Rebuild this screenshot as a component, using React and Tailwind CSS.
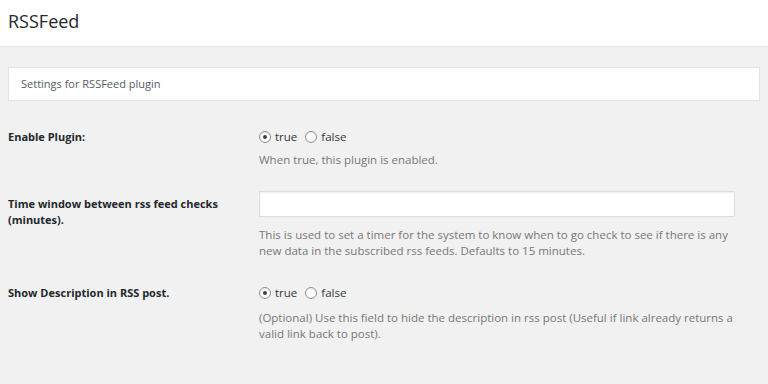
import React, { useState } from 'react';

const Radio = ({ checked, label, onClick }) => (
    <label className="flex items-center gap-[4px] cursor-pointer" onClick={onClick}>
        <span className="w-[12px] h-[12px] rounded-full border border-[#8c8f94] bg-white flex items-center justify-center shadow-[inset_0_1px_2px_rgba(0,0,0,0.1)]">
            {checked && <span className="w-[4px] h-[4px] rounded-full bg-[#3c434a]" />}
        </span>
        <span>{label}</span>
    </label>
);

const BoolField = ({ value, onChange }) => (
    <div className="flex items-center gap-[8px] h-[16px] text-[11.5px] text-[#32373c]">
        <Radio checked={value} label="true" onClick={() => onChange(true)} />
        <Radio checked={!value} label="false" onClick={() => onChange(false)} />
    </div>
);

const App = () => {
    const [enabled, setEnabled] = useState(true);
    const [interval, setInterval] = useState('');
    const [showDesc, setShowDesc] = useState(true);

    return (
        <div className="min-h-screen bg-[#f1f1f1] text-[11px] leading-[16px] text-[#444] font-['Open_Sans',sans-serif]">
            {/* Header */}
            <div className="bg-white h-[47px] border-b border-[#e5e5e5] px-[8px] pt-[8px]">
                <h1 className="text-[18px] leading-[26px] text-[#23282d]">RSSFeed</h1>
            </div>

            <div className="px-[8px] pt-[20px]">
                <div className="bg-white border border-[#e2e2e2] h-[34px] px-[12px] flex items-center text-[#555d66]">
                    Settings for RSSFeed plugin
                </div>

                {/* Enable Plugin */}
                <div className="flex mt-[28px]">
                    <div className="w-[251px] shrink-0 font-bold text-[#23282d]">Enable Plugin:</div>
                    <div className="flex-1">
                        <BoolField value={enabled} onChange={setEnabled} />
                        <p className="mt-[7px] text-[11.5px] text-[#777]">When true, this plugin is enabled.</p>
                    </div>
                </div>

                {/* Time window */}
                <div className="flex mt-[23px]">
                    <div className="w-[251px] shrink-0 pr-[20px] pt-[5px] font-bold text-[#23282d]">
                        Time window between rss feed checks (minutes).
                    </div>
                    <div className="w-[476px]">
                        <input
                            type="text"
                            value={interval}
                            onChange={(e) => setInterval(e.target.value)}
                            className="w-full h-[26px] bg-white border border-[#ddd] shadow-[inset_0_1px_2px_rgba(0,0,0,0.07)] outline-none px-[6px]"
                        />
                        <p className="mt-[10px] text-[11.5px] text-[#777]">
                            This is used to set a timer for the system to know when to go check to see if there is any new data in the subscribed rss feeds. Defaults to 15 minutes.
                        </p>
                    </div>
                </div>

                {/* Show description */}
                <div className="flex mt-[26px]">
                    <div className="w-[251px] shrink-0 font-bold text-[#23282d]">Show Description in RSS post.</div>
                    <div className="w-[476px]">
                        <BoolField value={showDesc} onChange={setShowDesc} />
                        <p className="mt-[9px] text-[11.5px] text-[#777]">
                            (Optional) Use this field to hide the description in rss post (Useful if link already returns a valid link back to post).
                        </p>
                    </div>
                </div>
            </div>
        </div>
    );
};

export default App;
